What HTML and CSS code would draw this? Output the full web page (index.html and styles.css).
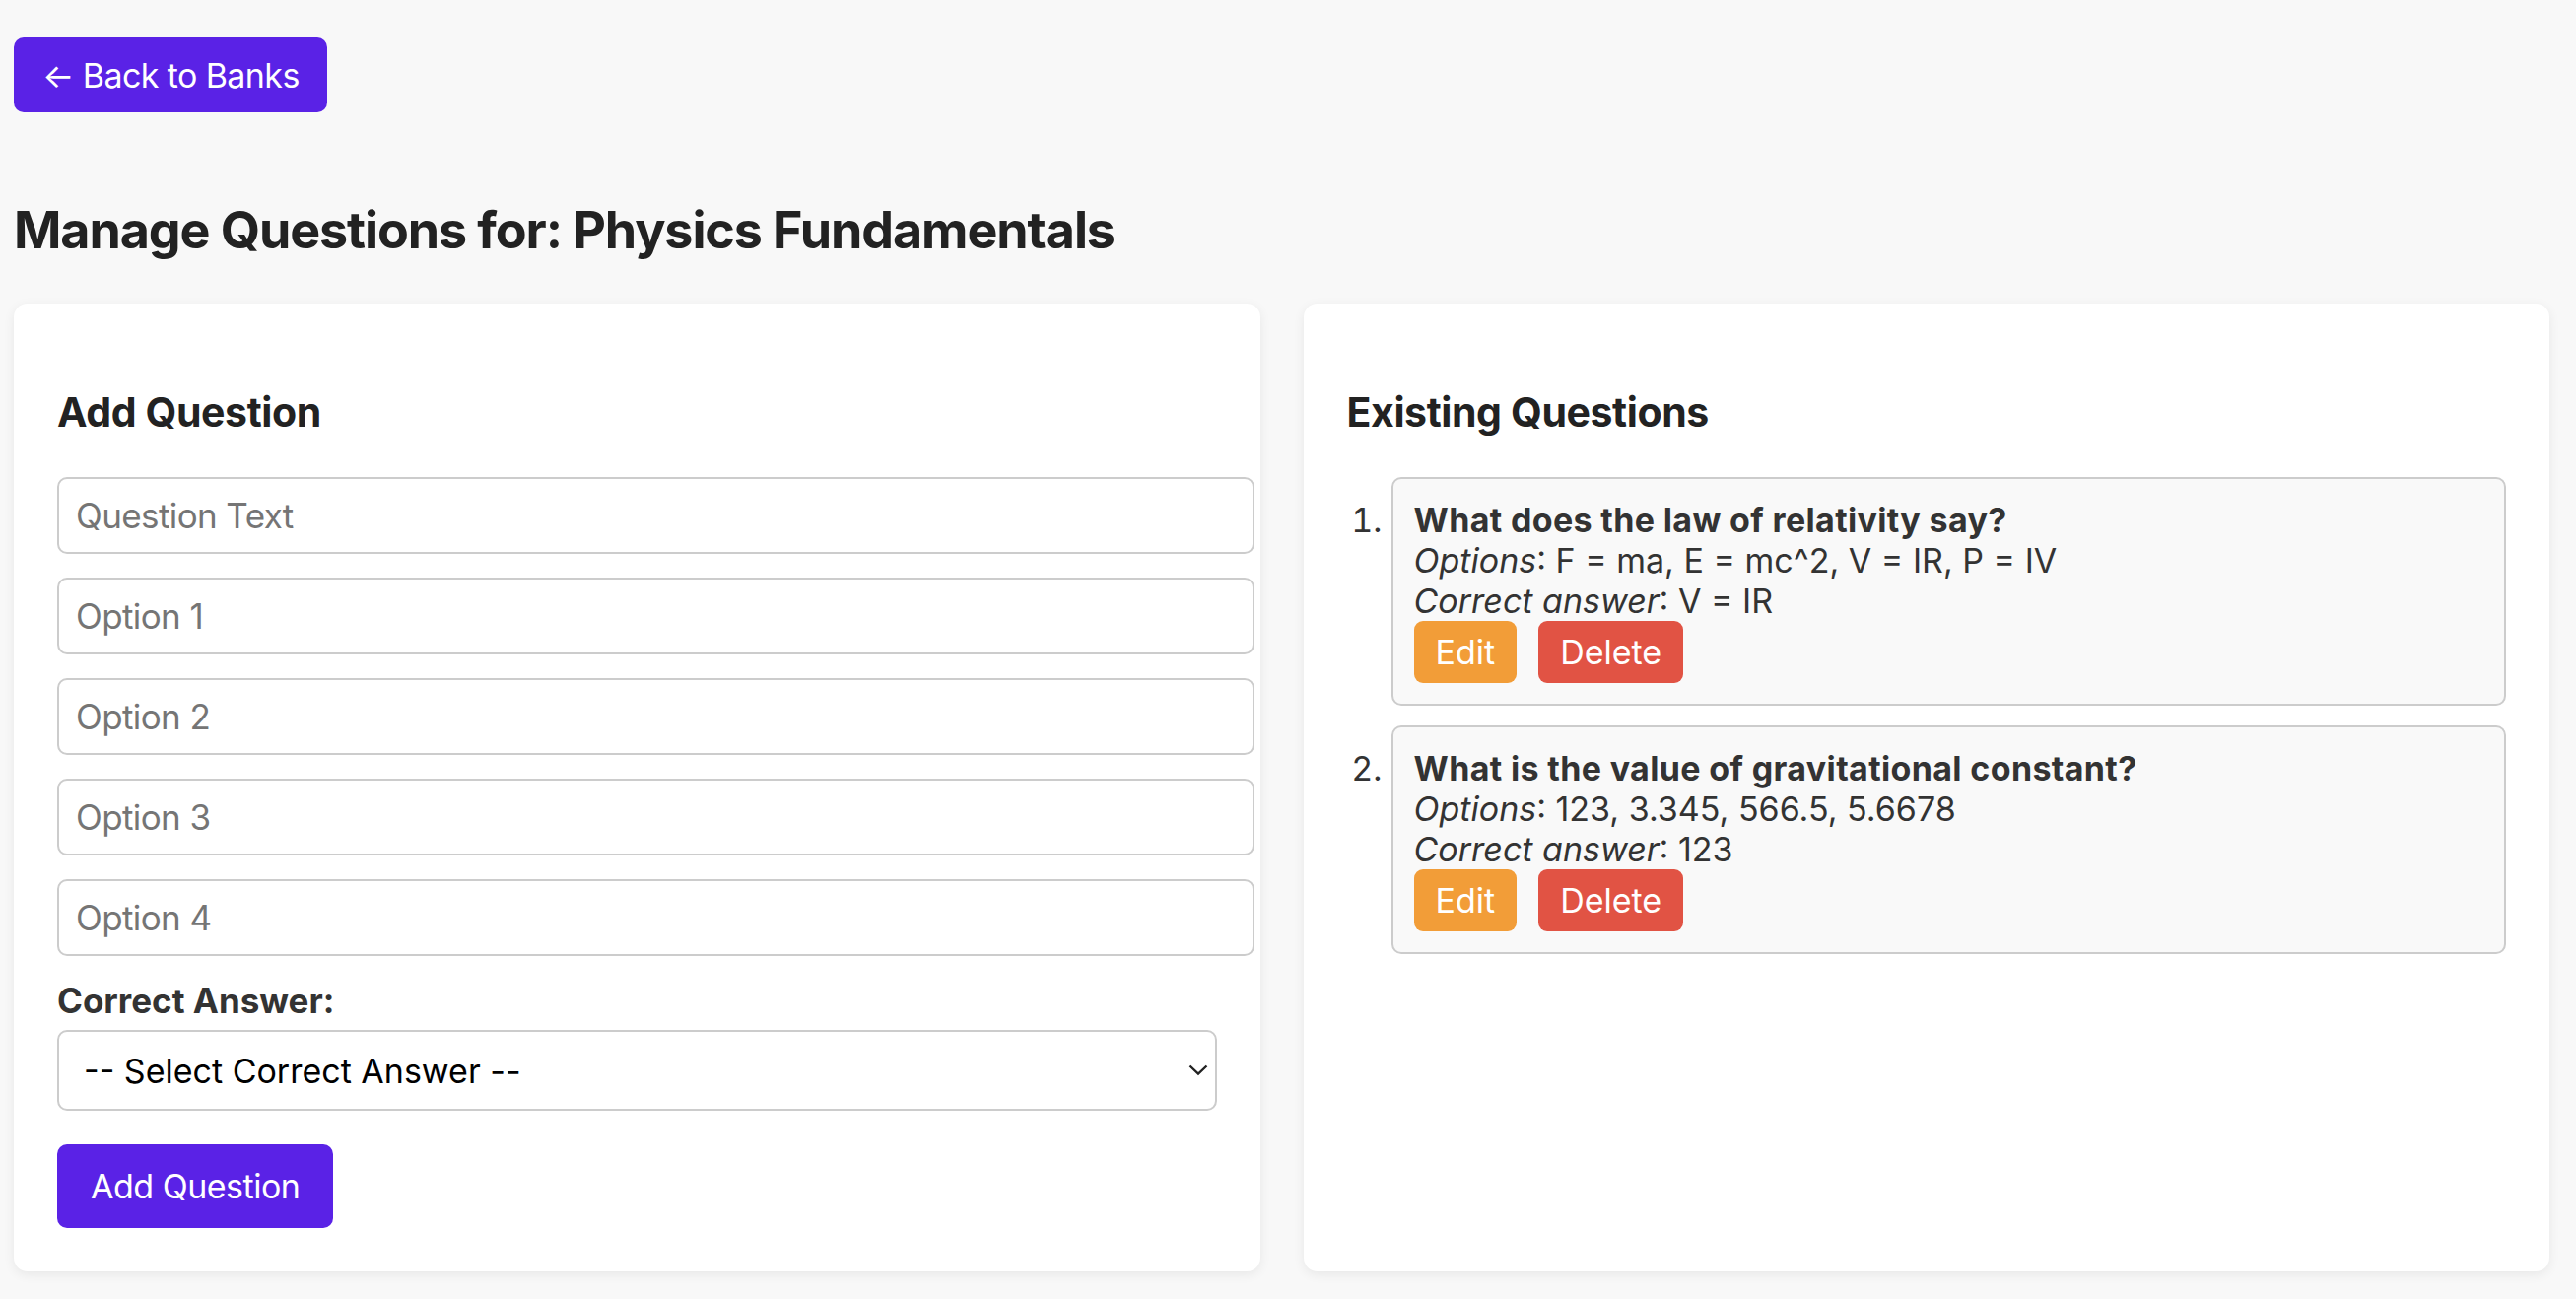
FILE: index.html
```html
<!DOCTYPE html>
<html lang="en">
<head>
<meta charset="utf-8">
<title>Manage Questions</title>
<link rel="stylesheet" href="styles.css">
</head>
<body>
<div class="page">
  <div class="topbar">
    <button class="back-btn">← Back to Banks</button>
  </div>
  <h1 class="page-title">Manage Questions for: Physics Fundamentals</h1>
  <div class="columns">
    <section class="card">
      <h3 class="card-title">Add Question</h3>
      <input class="text-input" type="text" placeholder="Question Text">
      <input class="text-input" type="text" placeholder="Option 1">
      <input class="text-input" type="text" placeholder="Option 2">
      <input class="text-input" type="text" placeholder="Option 3">
      <input class="text-input" type="text" placeholder="Option 4">
      <label class="field-label">Correct Answer:</label>
      <div class="select-wrap">
        <select class="select">
          <option>-- Select Correct Answer --</option>
        </select>
        <svg class="chevron" width="20" height="12" viewBox="0 0 20 12"><path d="M1.5 1.5 L10 9.5 L18.5 1.5" fill="none" stroke="#222" stroke-width="2.4"/></svg>
      </div>
      <button class="primary-btn">Add Question</button>
    </section>
    <section class="card">
      <h3 class="card-title">Existing Questions</h3>
      <ol class="q-list">
        <li class="q-item">
          <div class="q-title">What does the law of relativity say?</div>
          <div class="q-line"><em>Options</em>: F = ma, E = mc^2, V = IR, P = IV</div>
          <div class="q-line"><em>Correct answer</em>: V = IR</div>
          <div class="q-actions">
            <button class="btn-edit">Edit</button>
            <button class="btn-delete">Delete</button>
          </div>
        </li>
        <li class="q-item">
          <div class="q-title">What is the value of gravitational constant?</div>
          <div class="q-line"><em>Options</em>: 123, 3.345, 566.5, 5.6678</div>
          <div class="q-line"><em>Correct answer</em>: 123</div>
          <div class="q-actions">
            <button class="btn-edit">Edit</button>
            <button class="btn-delete">Delete</button>
          </div>
        </li>
      </ol>
    </section>
  </div>
</div>
</body>
</html>
```
FILE: styles.css
```css
html, body {
  margin: 0;
  background: #f8f8f8;
  font-family: Inter, "Helvetica Neue", "Liberation Sans", Arial, sans-serif;
  color: #222;
}

.page {
  padding: 38px 27px 25px 14px;
}

.topbar {
  display: flex;
}

.back-btn {
  display: flex;
  align-items: center;
  height: 76px;
  padding: 0 28px 0 29px;
  background: #5a22e6;
  color: #fff;
  border: none;
  border-radius: 10px;
  font-family: inherit;
  font-size: 34px;
  letter-spacing: -0.6px;
}

.page-title {
  font-size: 52px;
  line-height: 64px;
  font-weight: 700;
  letter-spacing: -1.1px;
  color: #222;
  margin: 88px 0 42px;
}

.columns {
  display: grid;
  grid-template-columns: 1fr 1fr;
  gap: 44px;
}

.card {
  background: #fff;
  border-radius: 14px;
  padding: 44px;
  box-shadow: 0 3px 12px rgba(0, 0, 0, 0.07);
  min-width: 0;
}

.card-title {
  font-size: 41px;
  line-height: 50px;
  font-weight: 700;
  letter-spacing: -0.4px;
  color: #222;
  margin: 41px 0 41px;
}

.text-input {
  display: block;
  width: 100%;
  height: 74px;
  padding: 0 17px;
  margin: 0 0 24px;
  border: 2px solid #ccc;
  border-radius: 10px;
  background: #fff;
  font-family: inherit;
  font-size: 35px;
  letter-spacing: -0.6px;
  color: #222;
  box-sizing: content-box;
}

.text-input::placeholder {
  color: #757575;
}

.field-label {
  display: block;
  margin-top: 2px;
  font-size: 35px;
  line-height: 42px;
  font-weight: 700;
  color: #333;
}

.select-wrap {
  position: relative;
  margin-top: 9px;
}

.select {
  display: block;
  width: 100%;
  height: 82px;
  padding: 0 0 0 25px;
  border: 2px solid #ccc;
  border-radius: 10px;
  background: #fff;
  font-family: inherit;
  font-size: 34px;
  color: #000;
  appearance: none;
  -webkit-appearance: none;
}

.chevron {
  position: absolute;
  right: 9px;
  top: 35px;
}

.primary-btn {
  display: block;
  margin-top: 34px;
  height: 85px;
  padding: 0 34px;
  background: #5a22e6;
  color: #fff;
  border: none;
  border-radius: 10px;
  font-family: inherit;
  font-size: 34px;
  letter-spacing: -0.5px;
}

.q-list {
  margin: 0;
  padding-left: 45px;
  color: #333;
  font-size: 34px;
  line-height: 41px;
}

.q-item {
  border: 2px solid #ccc;
  border-radius: 10px;
  background: #f9f9f9;
  padding: 21px;
  margin-bottom: 20px;
}

.q-title {
  font-weight: 700;
  letter-spacing: 0.35px;
}

.q-line em {
  font-style: italic;
}

.q-actions {
  display: flex;
  gap: 22px;
}

.btn-edit,
.btn-delete {
  height: 63px;
  padding: 0 22px;
  border: none;
  border-radius: 9px;
  color: #fff;
  font-family: inherit;
  font-size: 34px;
}

.btn-edit {
  background: #f29d38;
}

.btn-delete {
  background: #e15344;
}
```
